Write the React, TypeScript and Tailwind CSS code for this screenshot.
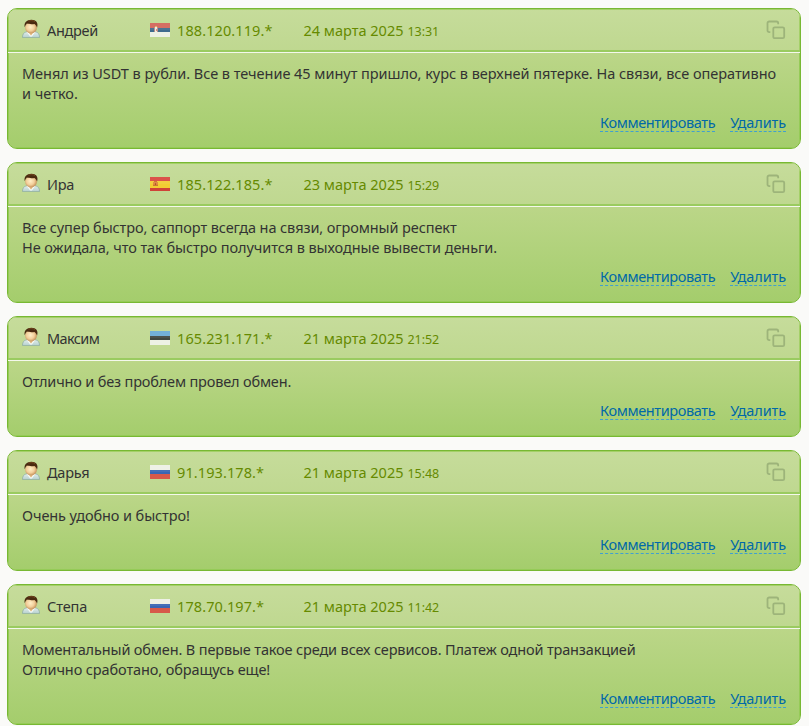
import React from "react";

type Country = "rs" | "es" | "ee" | "ru";

interface Review {
  name: string;
  nameSpacing: string;
  country: Country;
  ip: string;
  date: string;
  time: string;
  lines: { text: string; spacing: string }[];
}

const reviews: Review[] = [
  {
    name: "Андрей",
    nameSpacing: "tracking-[-0.3px]",
    country: "rs",
    ip: "188.120.119.*",
    date: "24 марта 2025",
    time: "13:31",
    lines: [
      { text: "Менял из USDT в рубли. Все в течение 45 минут пришло, курс в верхней пятерке. На связи, все оперативно", spacing: "tracking-[-0.035px]" },
      { text: "и четко.", spacing: "tracking-[0px]" },
    ],
  },
  {
    name: "Ира",
    nameSpacing: "tracking-[-0.3px]",
    country: "es",
    ip: "185.122.185.*",
    date: "23 марта 2025",
    time: "15:29",
    lines: [
      { text: "Все супер быстро, саппорт всегда на связи, огромный респект", spacing: "tracking-[-0.1px]" },
      { text: "Не ожидала, что так быстро получится в выходные вывести деньги.", spacing: "tracking-[-0.065px]" },
    ],
  },
  {
    name: "Максим",
    nameSpacing: "tracking-[-0.6px]",
    country: "ee",
    ip: "165.231.171.*",
    date: "21 марта 2025",
    time: "21:52",
    lines: [{ text: "Отлично и без проблем провел обмен.", spacing: "tracking-[-0.17px]" }],
  },
  {
    name: "Дарья",
    nameSpacing: "tracking-[-0.2px]",
    country: "ru",
    ip: "91.193.178.*",
    date: "21 марта 2025",
    time: "15:48",
    lines: [{ text: "Очень удобно и быстро!", spacing: "tracking-[-0.09px]" }],
  },
  {
    name: "Степа",
    nameSpacing: "tracking-[-0.1px]",
    country: "ru",
    ip: "178.70.197.*",
    date: "21 марта 2025",
    time: "11:42",
    lines: [
      { text: "Моментальный обмен. В первые такое среди всех сервисов. Платеж одной транзакцией", spacing: "tracking-[-0.14px]" },
      { text: "Отлично сработано, обращусь еще!", spacing: "tracking-[-0.11px]" },
    ],
  },
];

function Avatar() {
  return (
    <svg width="18" height="19" viewBox="0 -0.4 18 19" className="block shrink-0">
      <defs>
        <radialGradient id="face" cx="0.45" cy="0.45" r="0.6">
          <stop offset="0" stopColor="#fff0c8" />
          <stop offset="0.55" stopColor="#f3cf9b" />
          <stop offset="1" stopColor="#bd8650" />
        </radialGradient>
        <linearGradient id="shirt" x1="0" y1="0" x2="0" y2="1">
          <stop offset="0" stopColor="#e4eeea" />
          <stop offset="1" stopColor="#b5d0d0" />
        </linearGradient>
      </defs>
      <path d="M0.5 18.2C0.4 14.8 1.6 13 5 12.2L13 12.2C16.4 13 17.6 14.8 17.5 18.2Z" fill="url(#shirt)" stroke="#8fae9f" strokeWidth="0.8" />
      <path d="M6 12L9 16.5L12 12Z" fill="#e6bd84" />
      <path d="M5.3 12.3L8.7 17M12.7 12.3L9.3 17" stroke="#f8fbf8" strokeWidth="1.1" />
      <ellipse cx="9" cy="8.2" rx="5.9" ry="5.8" fill="url(#face)" />
      <path d="M2.7 7.8C1.8 3.2 4.8 0.4 9.4 0.4C14.2 0.4 16.4 3.2 15.1 8.2C14.5 6.6 13.6 5.3 12.6 4.5C9.8 5.1 6.6 4.7 4.9 4.2C4 5.1 3.3 6.4 2.7 7.8Z" fill="#4a2a10" />
      <path d="M6.5 1.8C8.6 0.9 11 1 13 2.3" stroke="#7c4d20" strokeWidth="0.8" fill="none" />
    </svg>
  );
}

const stripes: Record<Country, [string, number][]> = {
  rs: [["#d3655a", 5], ["#3f6b8e", 4], ["#edf1e5", 5]],
  es: [["#d9483f", 4], ["#f2cd32", 7], ["#cf4338", 3]],
  ee: [["#6bacd5", 5], ["#414840", 4], ["#edf1e5", 5]],
  ru: [["#edf1e5", 5], ["#3a66b4", 4], ["#d7594a", 5]],
};

function Flag({ country }: { country: Country }) {
  let y = 0;
  return (
    <svg width="20" height="14" viewBox="0 0 20 14" shapeRendering="crispEdges" className="mt-px block shrink-0">
      {stripes[country].map(([color, height], i) => {
        const top = y;
        y += height;
        return <rect key={i} x="0" y={top} width="20" height={height} fill={color} />;
      })}
      {country === "rs" && (
        <g>
          <rect x="4" y="4" width="4" height="5" fill="#b58d8c" />
          <rect x="5" y="4" width="2" height="5" fill="#f0ece0" />
          <rect x="5" y="3" width="2" height="1" fill="#e0b45a" />
          <rect x="6" y="6" width="1" height="2" fill="#d98a78" />
        </g>
      )}
      {country === "es" && (
        <g>
          <rect x="3" y="5" width="5" height="4" fill="#dc8a35" />
          <rect x="4" y="4" width="3" height="1" fill="#c9722c" />
          <rect x="5" y="6" width="1" height="2" fill="#b94c2e" />
          <rect x="3" y="8" width="5" height="1" fill="#cc7a30" />
        </g>
      )}
      <rect x="0" y="0" width="20" height="7" fill="#fff" opacity="0.06" />
    </svg>
  );
}

function CopyIcon() {
  return (
    <svg width="20" height="20" viewBox="0 0 20 20" fill="none" stroke="#9db47a" strokeWidth="1.8" className="mt-px block">
      <rect x="7.3" y="7.3" width="10.9" height="10.9" rx="1.5" />
      <path d="M4.3 12.2H3.2C2.2 12.2 1.5 11.5 1.5 10.5V3.2C1.5 2.2 2.2 1.5 3.2 1.5H10.5C11.5 1.5 12.2 2.2 12.2 3.2V4.3" />
    </svg>
  );
}

function ReviewCard({ review }: { review: Review }) {
  return (
    <article className="overflow-hidden rounded-[10px] border border-[#78b833] bg-linear-to-b from-[#c6db9b] to-[#a4cd6c]">
      <header className="flex h-[43px] items-center border-b-2 border-[#9acb60] bg-linear-to-b from-[#c6dc9b] to-[#bfd890] pr-[14px] pl-[14px] shadow-[inset_1px_1px_0_#a4d068,inset_-1px_0_0_#a4d068]">
        <div className="flex w-[128px] items-center gap-[7px]">
          <div className="-mt-[2px]">
            <Avatar />
          </div>
          <span className={`mt-px text-[#333] ${review.nameSpacing}`}>{review.name}</span>
        </div>
        <div className="flex w-[153.5px] items-center gap-[7px]">
          <Flag country={review.country} />
          <span className="mt-px tracking-[0.1px] text-[#668a00]">{review.ip}</span>
        </div>
        <div className="mt-[2px] flex grow items-baseline gap-1 text-[#668a00]">
          <span>{review.date}</span>
          <span className="text-[12.5px] tracking-[-0.05px]">{review.time}</span>
        </div>
        <CopyIcon />
      </header>
      <div className="border-t border-[#f4f8ec] bg-linear-to-b from-[#bbd688] to-[#a4cd6c] px-[14px] pt-[10px] pb-4 shadow-[inset_1px_-1px_0_#95cb57,inset_-1px_0_0_#95cb57]">
        <div className="text-[#333]">
          {review.lines.map((line) => (
            <p key={line.text} className="h-5 whitespace-nowrap">
              <span className={line.spacing}>{line.text}</span>
            </p>
          ))}
        </div>
        <div className="mt-[9px] flex h-5 justify-end gap-[15px] text-[#0069a8]">
          <a className="h-5 border-b border-dashed border-[#3fa0d0] tracking-[-0.38px]">Комментировать</a>
          <a className="h-5 border-b border-dashed border-[#3fa0d0] tracking-[-0.1px]">Удалить</a>
        </div>
      </div>
    </article>
  );
}

export default function App() {
  return (
    <main className="flex h-[726px] w-[809px] flex-col gap-[13px] overflow-hidden bg-[#fafaf8] pt-2 pr-2 pl-[7px] font-['Noto_Sans','Liberation_Sans',sans-serif] text-[14.5px] leading-5">
      {reviews.map((review) => (
        <ReviewCard key={review.name} review={review} />
      ))}
    </main>
  );
}
